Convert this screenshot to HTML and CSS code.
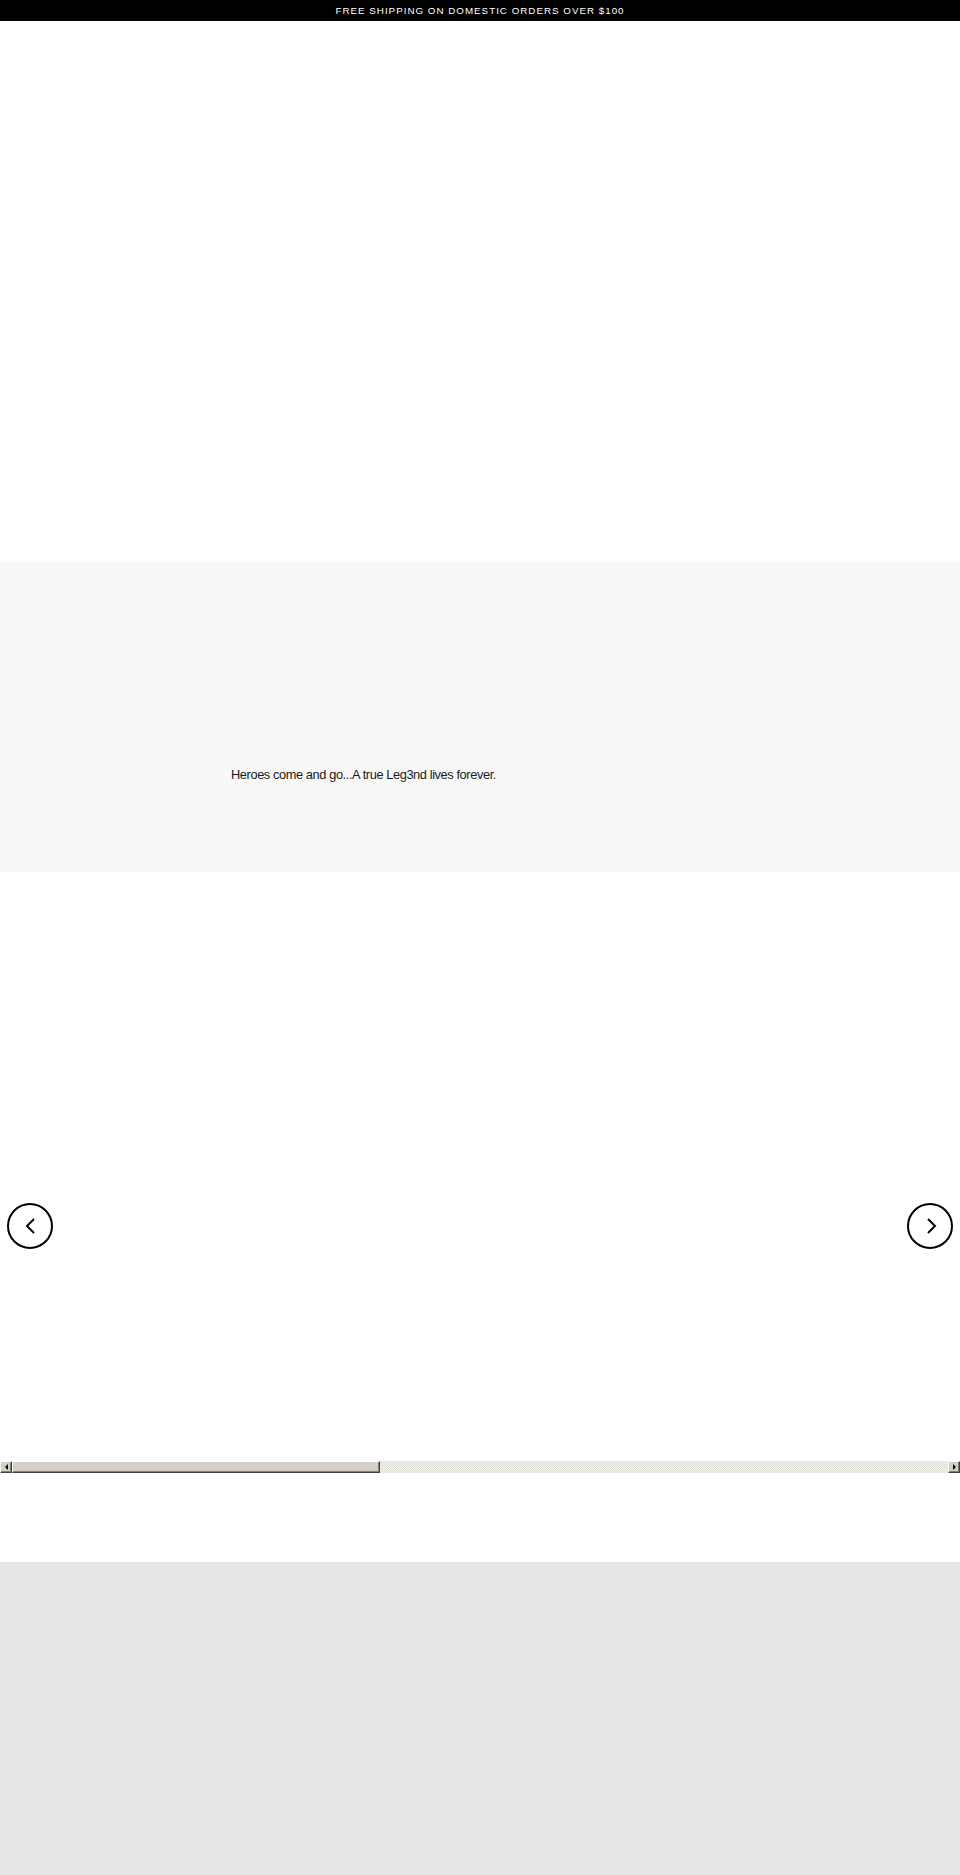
FILE: index.html
```html
<!DOCTYPE html>
<html lang="en">
<head>
<meta charset="utf-8">
<title>Leg3nd</title>
<link rel="stylesheet" href="styles.css">
</head>
<body>
  <div class="announcement">FREE SHIPPING ON DOMESTIC ORDERS OVER $100</div>

  <section class="hero"></section>

  <section class="quote">
    <p class="quote-text">Heroes come and go...A true Leg3nd lives forever.</p>
  </section>

  <section class="carousel">
    <div class="carousel-stage">
      <button class="carousel-arrow prev" aria-label="Previous">
        <svg width="12" height="16" viewBox="0 0 12 16"><path d="M9 1 L2 8 L9 15" fill="none" stroke="#000" stroke-width="2"/></svg>
      </button>
      <button class="carousel-arrow next" aria-label="Next">
        <svg width="12" height="16" viewBox="0 0 12 16"><path d="M3 1 L10 8 L3 15" fill="none" stroke="#000" stroke-width="2"/></svg>
      </button>
    </div>
    <div class="scrollbar">
      <div class="sb-button"><span class="tri left"></span></div>
      <div class="sb-thumb"></div>
      <div class="sb-track"></div>
      <div class="sb-button"><span class="tri right"></span></div>
    </div>
  </section>

  <footer class="footer"></footer>
</body>
</html>
```

FILE: styles.css
```css
* { box-sizing: border-box; }

body {
  margin: 0;
  font-family: "Liberation Sans", Arial, sans-serif;
  color: #111;
  background: #fff;
}

.announcement {
  height: 21px;
  background: #000;
  color: #fff;
  font-size: 9.8px;
  letter-spacing: 1px;
  display: flex;
  align-items: center;
  justify-content: center;
}

.hero {
  height: 541px;
}

.quote {
  height: 310px;
  background: #f8f8f8;
  padding: 0 0 0 231px;
  display: flex;
  align-items: flex-start;
}

.quote-text {
  margin: 0;
  padding-top: 204px;
  font-size: 12.8px;
  letter-spacing: -0.4px;
  line-height: 18px;
  color: #1a1a1a;
}

.carousel {
  height: 690px;
}

.carousel-stage {
  position: relative;
  height: 589px;
}

.carousel-arrow {
  position: absolute;
  top: 331px;
  width: 46px;
  height: 46px;
  border: 2px solid #000;
  border-radius: 50%;
  background: #fff;
  padding: 0;
  display: flex;
  align-items: center;
  justify-content: center;
}

.carousel-arrow.prev { left: 7px; }
.carousel-arrow.prev svg { margin-left: 2px; }
.carousel-arrow.next { right: 7px; }
.carousel-arrow.next svg { margin-left: 2px; }

.scrollbar {
  height: 12px;
  display: flex;
}

.sb-button,
.sb-thumb {
  background: #d4d0c8;
  border-top: 1px solid #fff;
  border-left: 1px solid #fff;
  border-right: 1px solid #404040;
  border-bottom: 1px solid #404040;
  box-shadow: inset -1px -1px 0 #808080;
}

.sb-button {
  width: 12px;
  display: flex;
  align-items: center;
  justify-content: center;
}

.sb-thumb {
  width: 368px;
}

.sb-track {
  flex: 1;
  background-color: #ebeae5;
  background-image: repeating-conic-gradient(#e2e0da 0 25%, #f2f1ee 0 50%);
  background-size: 2px 2px;
}

.tri {
  width: 0;
  height: 0;
  border-top: 3px solid transparent;
  border-bottom: 3px solid transparent;
}
.tri.left { border-right: 3px solid #000; }
.tri.right { border-left: 3px solid #000; }

.footer {
  height: 313px;
  background: #e5e5e5;
}
```
